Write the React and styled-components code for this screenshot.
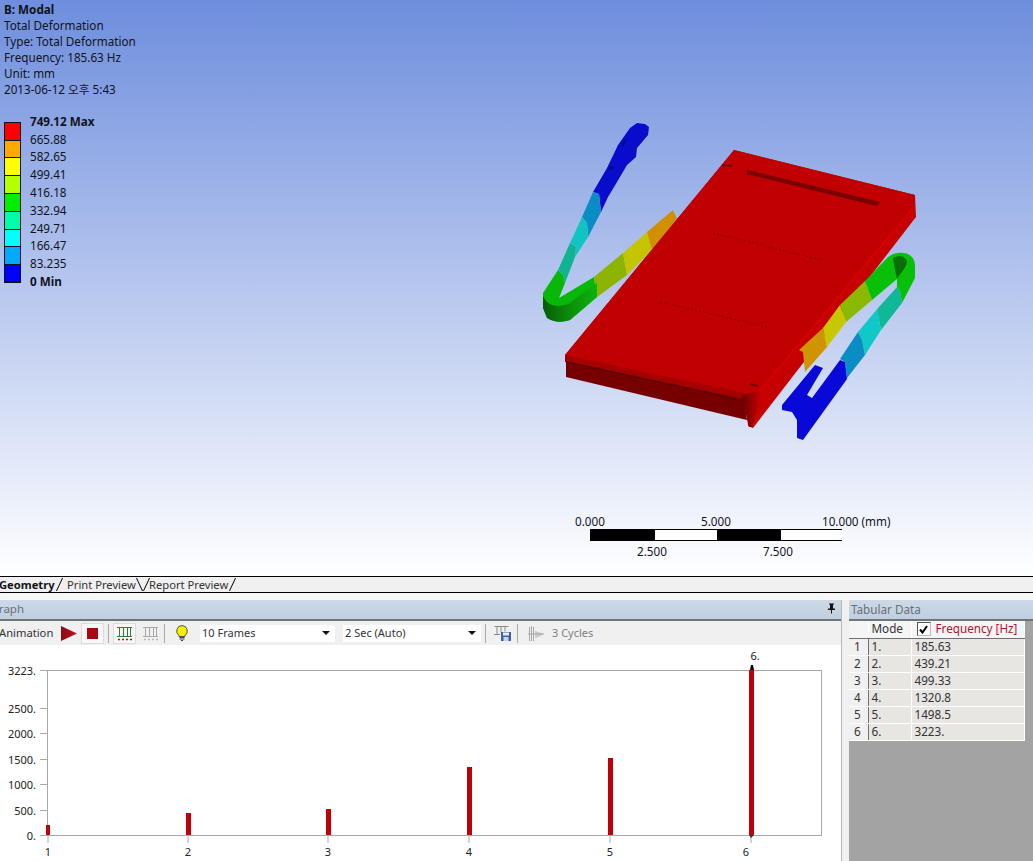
import React from "react";
import styled, { createGlobalStyle } from "styled-components";

const GlobalStyle = createGlobalStyle`
  html, body {
    margin: 0;
    padding: 0;
    background: #f0f0f0;
  }
  body {
    font-family: "Noto Sans", "Noto Sans CJK KR", Tahoma, sans-serif;
    font-size: 11.7px;
    color: #10131c;
    overflow: hidden;
  }
`;

const legendRows = [
  { label: "749.12 Max", color: "#ff0000", bold: true },
  { label: "665.88", color: "#ffaa00" },
  { label: "582.65", color: "#ffff00" },
  { label: "499.41", color: "#b4ff00" },
  { label: "416.18", color: "#00ee00" },
  { label: "332.94", color: "#00ffaa" },
  { label: "249.71", color: "#00ffff" },
  { label: "166.47", color: "#00aaff" },
  { label: "83.235", color: "#0000ff" },
  { label: "0 Min", bold: true }
];

const tableRows = [
  ["1", "1.", "185.63"],
  ["2", "2.", "439.21"],
  ["3", "3.", "499.33"],
  ["4", "4.", "1320.8"],
  ["5", "5.", "1498.5"],
  ["6", "6.", "3223."]
];

const Page = styled.div`
  width: 1033px;
  height: 861px;
  overflow: hidden;
  display: flex;
  flex-direction: column;
  background: #f0f0f0;
`;

const Viewport = styled.div`
  position: relative;
  height: 576px;
  flex: none;
  background: linear-gradient(180deg, #6e8edd 0%, #ffffff 100%);
`;

const Info = styled.div`
  position: absolute;
  left: 4px;
  top: 1px;
  line-height: 16px;
  white-space: nowrap;
`;

const InfoTitle = styled.div`
  font-weight: 700;
`;

const Legend = styled.div`
  position: absolute;
  left: 4px;
  top: 113px;
  display: flex;
  flex-direction: column;
`;

const LegendRow = styled.div`
  height: 17.8px;
  display: flex;
  align-items: center;
  position: relative;
  padding-left: 26px;
  line-height: 16px;
  font-weight: ${(p) => (p.$bold ? 700 : 400)};
  white-space: nowrap;
`;

const LegendText = styled.span`
  margin-top: -2px;
`;

const Swatch = styled.span`
  position: absolute;
  left: 0;
  top: 8.9px;
  width: 15px;
  height: 16.8px;
  border: 1px solid #10131c;
  border-width: 1px 1px 0 1px;
  background: ${(p) => p.$color};
`;

const LegendEnd = styled.span`
  position: absolute;
  left: 0;
  top: 8px;
  width: 17px;
  height: 2px;
  background: #10131c;
`;

const Model = styled.svg`
  position: absolute;
  left: 540px;
  top: 120px;
`;

const Scale = styled.div`
  position: absolute;
  left: 590px;
  top: 514px;
  width: 252px;
  display: grid;
  grid-template-columns: repeat(4, 63px);
  white-space: nowrap;
  line-height: 15px;
`;

const ScaleTop = styled.span`
  grid-column: ${(p) => p.$col} / span 1;
  margin-left: -15px;
`;

const ScaleEnd = styled.span`
  grid-column: 4;
  grid-row: 1;
  margin-left: 43px;
`;

const ScaleBottom = styled.span`
  grid-row: 3;
  grid-column: ${(p) => p.$col};
  margin-left: 47px;
  margin-top: 3px;
`;

const ScaleBar = styled.div`
  grid-row: 2;
  grid-column: 1 / span 4;
  height: 10px;
  display: grid;
  grid-template-columns: 64px 62px 64px 62px;
  border: 1px solid #000;
  background: #fff;
  box-sizing: content-box;
  width: 250px;
`;

const ScaleCell = styled.div`
  background: ${(p) => (p.$dark ? "#000" : "#fff")};
`;

const TabBar = styled.div`
  height: 15px;
  flex: none;
  display: flex;
  align-items: center;
  border-top: 1px solid #000;
  border-bottom: 1px solid #000;
  background: #f0f0f0;
  overflow: hidden;
`;

// a slanted edge drawn on the tab's right side, and optionally at its lead-in
const Tab = styled.div`
  position: relative;
  flex: none;
  box-sizing: border-box;
  width: ${(p) => p.$w}px;
  margin-left: ${(p) => p.$ml || 0}px;
  padding-left: ${(p) => p.$pl || 0}px;
  font-size: 11.2px;
  font-weight: ${(p) => (p.$active ? 700 : 400)};
  line-height: 15px;
  white-space: nowrap;
  color: ${(p) => (p.$active ? "#10131c" : "#333")};
  &::after {
    content: "";
    position: absolute;
    right: -3px;
    top: 1px;
    height: 13px;
    border-right: 1px solid #000;
    transform: skewX(${(p) => (p.$back ? 25 : -25)}deg);
  }
  ${(p) =>
    p.$lead
      ? `&::before {
    content: "";
    position: absolute;
    left: ${p.$lead}px;
    top: 1px;
    height: 13px;
    border-left: 1px solid #000;
    transform: skewX(-25deg);
  }`
      : ""}
`;

const Panels = styled.div`
  flex: 1;
  display: flex;
  padding-top: 7px;
  min-height: 0;
  background: linear-gradient(180deg, #f7f7f7 0, #f7f7f7 7px, #f0f0f0 7px);
`;

const GraphPanel = styled.div`
  width: 842px;
  flex: none;
  display: flex;
  flex-direction: column;
  overflow: hidden;
  border-right: 1px solid #b8b8b8;
  box-sizing: border-box;
`;

const TabularPanel = styled.div`
  margin-left: 7px;
  flex: 1;
  display: flex;
  flex-direction: column;
  background: #a3a3a3;
`;

const TitleBar = styled.div`
  height: 21px;
  flex: none;
  display: flex;
  align-items: center;
  justify-content: space-between;
  box-sizing: border-box;
  padding: 0 5px 2px 2px;
  color: #687078;
  background: linear-gradient(180deg, #ced9e6, #bfcfdf);
  border-bottom: 2px solid #6f7478;
`;

const GraphTitle = styled.span`
  margin-left: -11.5px;
  font-size: 11.5px;
`;

const Toolbar = styled.div`
  height: 24px;
  flex: none;
  display: flex;
  align-items: center;
  background: #f0f0f0;
`;

const ToolLabel = styled.span`
  margin-left: -1px;
  margin-bottom: 2px;
  width: 62px;
  flex: none;
  color: #333;
  font-size: 11.2px;
`;

const ToolButton = styled.div`
  width: ${(p) => p.$w || 23}px;
  height: 21px;
  margin-left: ${(p) => p.$ml || 0}px;
  flex: none;
  display: flex;
  align-items: center;
  justify-content: center;
  box-sizing: border-box;
  border: 1px solid ${(p) => (p.$boxed ? "#dcdcdc" : "transparent")};
  background: ${(p) => (p.$boxed ? "#f8f8f8" : "transparent")};
`;

const Sep = styled.span`
  width: 1px;
  height: 19px;
  margin-left: ${(p) => p.$ml}px;
  flex: none;
  background: #a8a8a8;
`;

const ToolIcon = styled.svg`
  flex: none;
  margin-left: ${(p) => p.$ml || 0}px;
`;

const Select = styled.div`
  width: ${(p) => p.$w}px;
  height: 17px;
  margin-left: ${(p) => p.$ml}px;
  flex: none;
  display: flex;
  align-items: center;
  justify-content: space-between;
  box-sizing: border-box;
  padding: 0 5px 2px 2px;
  background: #fff;
  color: #333;
  font-size: 11px;
`;

const Arrow = styled.span`
  width: 0;
  height: 0;
  margin-top: 2px;
  border-left: 4px solid transparent;
  border-right: 4px solid transparent;
  border-top: 4px solid #111;
`;

const Cycles = styled.span`
  margin-left: 8px;
  margin-bottom: 2px;
  color: #808080;
  font-size: 11px;
`;

const ChartArea = styled.div`
  flex: 1;
  background: #fff;
`;

const Table = styled.table`
  width: 176px;
  border-collapse: collapse;
  table-layout: fixed;
  background: #e8e6e3;
  color: #333;
  line-height: 14px;
  td, th {
    height: 17px;
    padding: 0 0 2px 3px;
    box-sizing: border-box;
    font-weight: 400;
    text-align: left;
    white-space: nowrap;
    border-right: 1px solid #fff;
    border-bottom: 1px solid #fff;
    overflow: hidden;
  }
`;

const RowHead = styled.td`
  background: #f0f0f0;
  border-right-color: #707070 !important;
  padding-left: 5px !important;
`;

const HeadCell = styled.th`
  background: #f5f5f5;
  border-bottom-color: #707070 !important;
`;

const FreqHead = styled.span`
  display: flex;
  align-items: center;
  gap: 5px;
  height: 14px;
  color: #b0142c;
`;

const Check = styled.span`
  width: 12px;
  height: 12px;
  flex: none;
  display: flex;
  align-items: center;
  justify-content: center;
  margin-left: 2px;
  margin-top: 2px;
  background: #fff;
  border: 1px solid #555;
  border-right-color: #bbb;
  border-bottom-color: #bbb;
`;

function Strap({ parts }) {
  return parts.map(([color, points]) => <polygon key={points} fill={color} points={points} />);
}

const leftStrap = [
  ["#0a0ccc", "637,123 645,124 649,127 648,135 637,148 636,157 627,165 617,182 608,197 601,212 599,194 593,192 607,168 618,145 630,128"],
  ["#0a8cc4", "593,192 599,194 601,212 588,237 587,223 582,217"],
  ["#10c4c4", "582,217 587,223 588,237 575,257 576,247 570,243"],
  ["#10b492", "570,243 576,247 575,257 565,283 563,275 558,270"],
  ["#08b808", "558,270 563,275 565,283 559,298 594,277 597,297 570,320 558,322 547,318 543,308 543,293"],
  ["#8cb400", "594,277 623,253 627,275 597,297"],
  ["#c4c400", "623,253 647,232 652,250 627,275"],
  ["#d09000", "647,232 673,210 677,219 652,250"]
];

const rightStrap = [
  ["#d09400", "799,350 823,328 827,347 805,372 803,352"],
  ["#c8c800", "823,328 840,305 846,322 827,347"],
  ["#8cb800", "840,305 865,281 872,300 846,322"],
  ["#10b898", "878,308 897,287 900,291 902,303 881,330 878,315"],
  ["#10c8c8", "858,332 878,308 878,315 881,330 865,355 862,340"],
  ["#0a8cc4", "840,359 858,332 862,340 865,355 847,378 845,362"],
  ["#0808d8", "840,360 845,362 847,379 803,440 797,438 797,420 792,412 782,410 782,405 815,365 823,368 807,395 812,398"]
];

function ModelDrawing() {
  return (
    <Model width="380" height="325" viewBox="540 120 380 325">
      <defs>
        <linearGradient id="curl" x1="0" y1="0" x2="1" y2="0">
          <stop offset="0" stopColor="#6a0000" />
          <stop offset="1" stopColor="#d00000" />
        </linearGradient>
        <linearGradient id="bend" x1="0" y1="0" x2="1" y2="0">
          <stop offset="0" stopColor="#065c06" />
          <stop offset="0.5" stopColor="#0a8f0a" />
          <stop offset="1" stopColor="#0cb40c" />
        </linearGradient>
      </defs>
      <Strap parts={leftStrap} />
      <path d="M543 296 C548 306 556 308 568 304 L597 283 L597 297 L570 320 C562 323 552 322 547 318 L543 308 Z" fill="url(#bend)" />
      <polygon points="623,141 627,138 625,144 621,147" fill="#08088c" />
      <polygon points="610,166 615,167 613,170 608,169" fill="#08088c" />
      <polygon fill="#c60000" points="734,150 915,195 916,217 753,428 748,426 746,395 565,358 565,355" />
      <polygon fill="#c00000" points="734,150 915,195 914,205 757,392 745,393 565,355" />
      <line x1="915" y1="206" x2="759" y2="392" stroke="#dc0000" strokeWidth="1.2" />
      <polygon fill="#a40000" points="565,355 745,393 745,400 565,362" />
      <polygon fill="#760000" points="566,361 744,399 747,420 566,377" />
      <line x1="566" y1="362" x2="744" y2="401" stroke="#520000" strokeWidth="1" />
      <path d="M742 395 C750 393 756 392 763 388 L752 427 L749 427 L747 419 Z" fill="url(#curl)" />
      <polygon fill="#7a0000" points="747,170 880,202 877,206 747,174" />
      <line x1="713" y1="233" x2="822" y2="260" stroke="#8a0000" strokeWidth="1" strokeDasharray="2 2" />
      <line x1="660" y1="302" x2="767" y2="327" stroke="#8a0000" strokeWidth="1" strokeDasharray="2 2" />
      <line x1="722" y1="165" x2="732" y2="166" stroke="#7a0000" strokeWidth="2" />
      <line x1="750" y1="384" x2="758" y2="386" stroke="#7a0000" strokeWidth="2" />
      <Strap parts={rightStrap} />
      <path d="M865 281 L887 258 C893 252 905 251 911 256 C914 259 915 262 915 266 L915 278 L902 303 L900 291 L897 287 L897 279 L872 300 Z" fill="#08c008" />
      <path d="M893 258 C899 255 906 256 907 262 C906 268 901 272 897 279 C895 270 894 264 893 258 Z" fill="#067006" />
    </Model>
  );
}

function ModalChart() {
  const yTicks = [
    { label: "3223.", y: 670 },
    { label: "2500.", y: 708 },
    { label: "2000.", y: 733 },
    { label: "1500.", y: 759 },
    { label: "1000.", y: 784 },
    { label: "500.", y: 810 },
    { label: "0.", y: 835 }
  ];
  const bars = [
    { n: 1, x: 46, w: 4, top: 825 },
    { n: 2, x: 186, w: 5, top: 813 },
    { n: 3, x: 326, w: 5, top: 809 },
    { n: 4, x: 467, w: 5, top: 767 },
    { n: 5, x: 608, w: 5, top: 758 },
    { n: 6, x: 749, w: 5, top: 670 }
  ];
  return (
    <svg width="841" height="216" viewBox="0 645 841 216" fontSize="11" fill="#222" fontFamily="'Noto Sans', sans-serif">
      <rect x="47.5" y="670.5" width="774" height="165" fill="#fff" stroke="#a8a8a8" />
      {yTicks.map((t) => (
        <g key={t.label}>
          <line x1="40" y1={t.y + 0.5} x2="47" y2={t.y + 0.5} stroke="#a8a8a8" />
          <text x="36" y={t.y + 5} textAnchor="end">{t.label}</text>
        </g>
      ))}
      {bars.map((b) => (
        <g key={b.n}>
          <line x1={b.x + 2} y1="836" x2={b.x + 2} y2="843" stroke="#a8a8a8" />
          <rect x={b.x} y={b.top} width={b.w} height={835 - b.top} fill="#c00008" />
          <text x={b.x + (b.n === 6 ? -3 : 2)} y="856" textAnchor="middle">{b.n}</text>
        </g>
      ))}
      <polygon points="750,670 751,665 753,665 754,670" fill="#000" />
      <polygon points="749,835 754,835 751,838" fill="#333" />
      <text x="755" y="660" textAnchor="middle">6.</text>
    </svg>
  );
}

function ColumnsIcon({ line, dash, ml }) {
  return (
    <ToolIcon width="15" height="15" viewBox="0 0 15 15" fill="none" $ml={ml}>
      <path d="M0 1.5h15M2.5 1.5v9M6.5 1.5v9M10.5 1.5v9M13.5 1.5v9M0 10.5h15" stroke={line} />
      <path d="M1 13.5h2M5 13.5h2M9 13.5h2M13 13.5h2" stroke={dash} strokeWidth="1.4" />
    </ToolIcon>
  );
}

export default function App() {
  return (
    <Page>
      <GlobalStyle />
      <Viewport>
        <Info>
          <InfoTitle>B: Modal</InfoTitle>
          <div>Total Deformation</div>
          <div>Type: Total Deformation</div>
          <div>Frequency: 185.63 Hz</div>
          <div>Unit: mm</div>
          <div>2013-06-12 오후 5:43</div>
        </Info>
        <Legend>
          {legendRows.map((row) => (
            <LegendRow key={row.label} $bold={row.bold}>
              {row.color ? <Swatch $color={row.color} /> : <LegendEnd />}
              <LegendText>{row.label}</LegendText>
            </LegendRow>
          ))}
        </Legend>
        <ModelDrawing />
        <Scale>
          <ScaleTop $col={1}>0.000</ScaleTop>
          <ScaleTop $col={3}>5.000</ScaleTop>
          <ScaleEnd>10.000 (mm)</ScaleEnd>
          <ScaleBar>
            <ScaleCell $dark />
            <ScaleCell />
            <ScaleCell $dark />
            <ScaleCell />
          </ScaleBar>
          <ScaleBottom $col={1}>2.500</ScaleBottom>
          <ScaleBottom $col={3}>7.500</ScaleBottom>
        </Scale>
      </Viewport>
      <TabBar>
        <Tab $active $ml={-1} $w={58}>Geometry</Tab>
        <Tab $w={80} $pl={10} $back>Print Preview</Tab>
        <Tab $w={93} $pl={12} $lead={9}>Report Preview</Tab>
      </TabBar>
      <Panels>
        <GraphPanel>
          <TitleBar>
            <GraphTitle>Graph</GraphTitle>
            <svg width="9" height="11" viewBox="0 0 9 11">
              <path d="M2 0.5h5v1h-1v4h2v1.5h-3v3.5h-1v-3.5h-3v-1.5h2v-4h-1z" fill="#111" />
            </svg>
          </TitleBar>
          <Toolbar>
            <ToolLabel>Animation</ToolLabel>
            <svg width="16" height="15" viewBox="0 0 16 15">
              <defs>
                <linearGradient id="play" x1="0" y1="0" x2="1" y2="0">
                  <stop offset="0" stopColor="#8a0a14" />
                  <stop offset="1" stopColor="#c01020" />
                </linearGradient>
              </defs>
              <polygon points="0,0 16,7.5 0,15" fill="url(#play)" />
            </svg>
            <ToolButton $boxed $ml={4}>
              <svg width="11" height="11" viewBox="0 0 11 11">
                <rect width="11" height="11" fill="#a80812" />
              </svg>
            </ToolButton>
            <Sep $ml={4} />
            <ToolButton $boxed $ml={4}>
              <ColumnsIcon line="#2f7a2f" dash="#b01010" />
            </ToolButton>
            <ToolButton $ml={2} $w={24}>
              <ColumnsIcon line="#a8a8a8" dash="#b8b8b8" />
            </ToolButton>
            <Sep $ml={2} />
            <ToolIcon width="12" height="16" viewBox="0 0 12 16" $ml={11}>
              <path d="M6 0.5a5.5 5.5 0 0 1 3 10v1h-6v-1a5.5 5.5 0 0 1 3-10z" fill="#f6f000" stroke="#555" />
              <path d="M3.5 12.5h5M3.5 14h5M5 15.5h2" stroke="#444" />
            </ToolIcon>
            <Select $w={135} $ml={12}>10 Frames<Arrow /></Select>
            <Select $w={138} $ml={8}>2 Sec (Auto)<Arrow /></Select>
            <Sep $ml={4} />
            <ToolIcon width="17" height="16" viewBox="0 0 17 16" $ml={8}>
              <path d="M0.5 1.5h14M3 1.5v8M7 1.5v6M11 1.5v5M0 9.5h6" stroke="#8a8a8a" fill="none" />
              <rect x="7" y="7" width="10" height="9" fill="#3f5fa8" />
              <rect x="9" y="7.5" width="6" height="3" fill="#e8eef8" />
              <rect x="9.5" y="12" width="5" height="4" fill="#c8d4ea" />
            </ToolIcon>
            <Sep $ml={6} />
            <ToolIcon width="16" height="15" viewBox="0 0 16 15" $ml={10}>
              <path d="M0 8h16M1.5 1v14M3.5 0v15M5.5 1v14M8 5v7M10 6v5M12 6.5v4M14 7v2" stroke="#a8a8a8" fill="none" />
            </ToolIcon>
            <Cycles>3 Cycles</Cycles>
          </Toolbar>
          <ChartArea>
            <ModalChart />
          </ChartArea>
        </GraphPanel>
        <TabularPanel>
          <TitleBar>Tabular Data</TitleBar>
          <Table>
            <colgroup>
              <col style={{ width: 19 }} />
              <col style={{ width: 43 }} />
              <col />
            </colgroup>
            <thead>
              <tr>
                <HeadCell />
                <HeadCell>Mode</HeadCell>
                <HeadCell>
                  <FreqHead>
                    <Check>
                      <svg width="9" height="9" viewBox="0 0 9 9">
                        <path d="M1 4.5l2.5 3L8 1" fill="none" stroke="#000" strokeWidth="2" />
                      </svg>
                    </Check>
                    Frequency [Hz]
                  </FreqHead>
                </HeadCell>
              </tr>
            </thead>
            <tbody>
              {tableRows.map(([idx, mode, freq]) => (
                <tr key={idx}>
                  <RowHead>{idx}</RowHead>
                  <td>{mode}</td>
                  <td>{freq}</td>
                </tr>
              ))}
            </tbody>
          </Table>
        </TabularPanel>
      </Panels>
    </Page>
  );
}
